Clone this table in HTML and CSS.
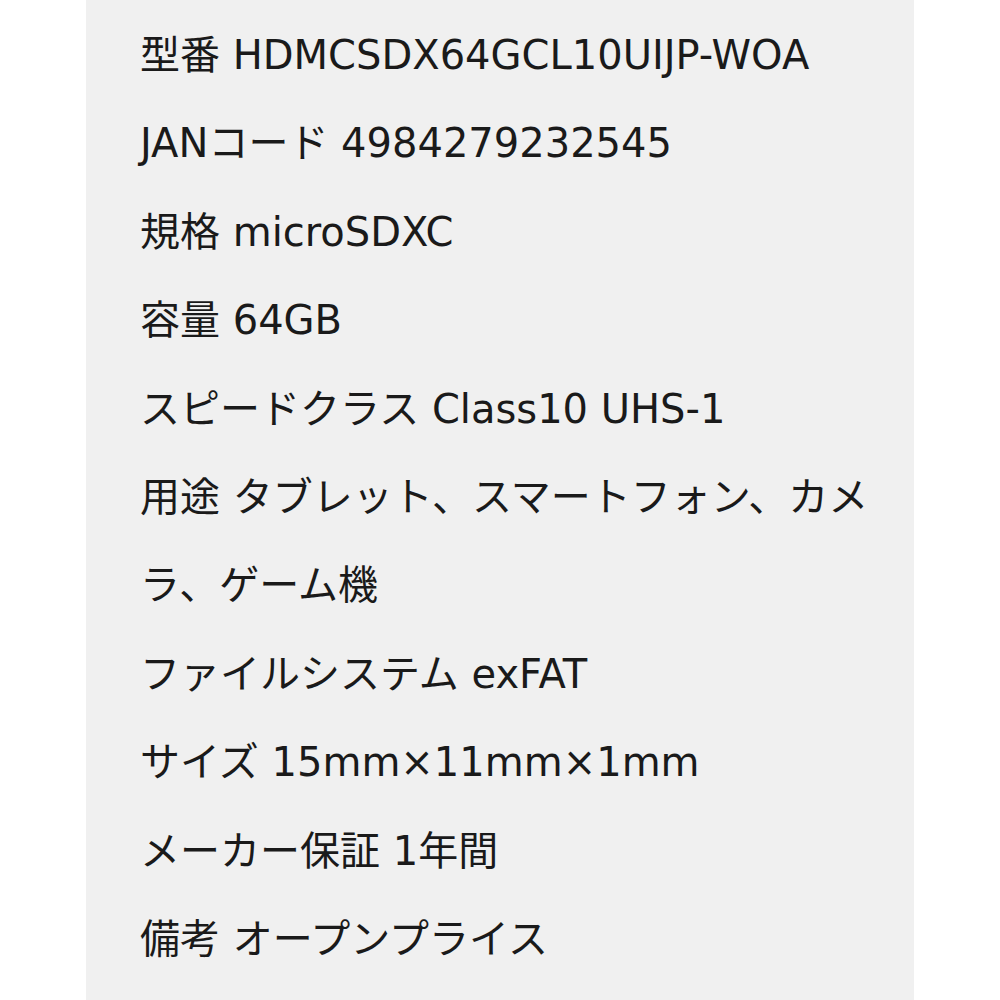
FILE: index.html
```html
<!DOCTYPE html>
<html lang="ja">
<head>
    <meta charset="UTF-8">
    <meta name="viewport" content="width=device-width, initial-scale=1.0">
    <title>製品仕様</title>
    <link rel="stylesheet" href="styles.css">
</head>
<body>

    <div class="spec-panel">
        <p class="spec-row">型番 HDMCSDX64GCL10UIJP-WOA</p>
        <p class="spec-row">JANコード 4984279232545</p>
        <p class="spec-row">規格 microSDXC</p>
        <p class="spec-row">容量 64GB</p>
        <p class="spec-row">スピードクラス Class10 UHS-1</p>
        <p class="spec-row">用途 タブレット、スマートフォン、カメラ、ゲーム機</p>
        <p class="spec-row">ファイルシステム exFAT</p>
        <p class="spec-row">サイズ 15mm×11mm×1mm</p>
        <p class="spec-row">メーカー保証 1年間</p>
        <p class="spec-row">備考 オープンプライス</p>
    </div>

</body>
</html>
```

FILE: styles.css
```css
/* Basic page setup */
* { box-sizing: border-box; margin: 0; padding: 0; }

body {
    background: #ffffff;
    font-family: 'DejaVu Sans', 'Noto Sans CJK JP', sans-serif;
    color: #1a1a1a;
}

/* Grey spec sheet panel */
.spec-panel {
    width: 828px;
    min-height: 1000px;
    margin-left: 86px;
    padding: 11px 30px 0 54px;
    background: #f0f0f0;
}

.spec-row {
    font-size: 40px;
    line-height: 88.4px;
}
```
